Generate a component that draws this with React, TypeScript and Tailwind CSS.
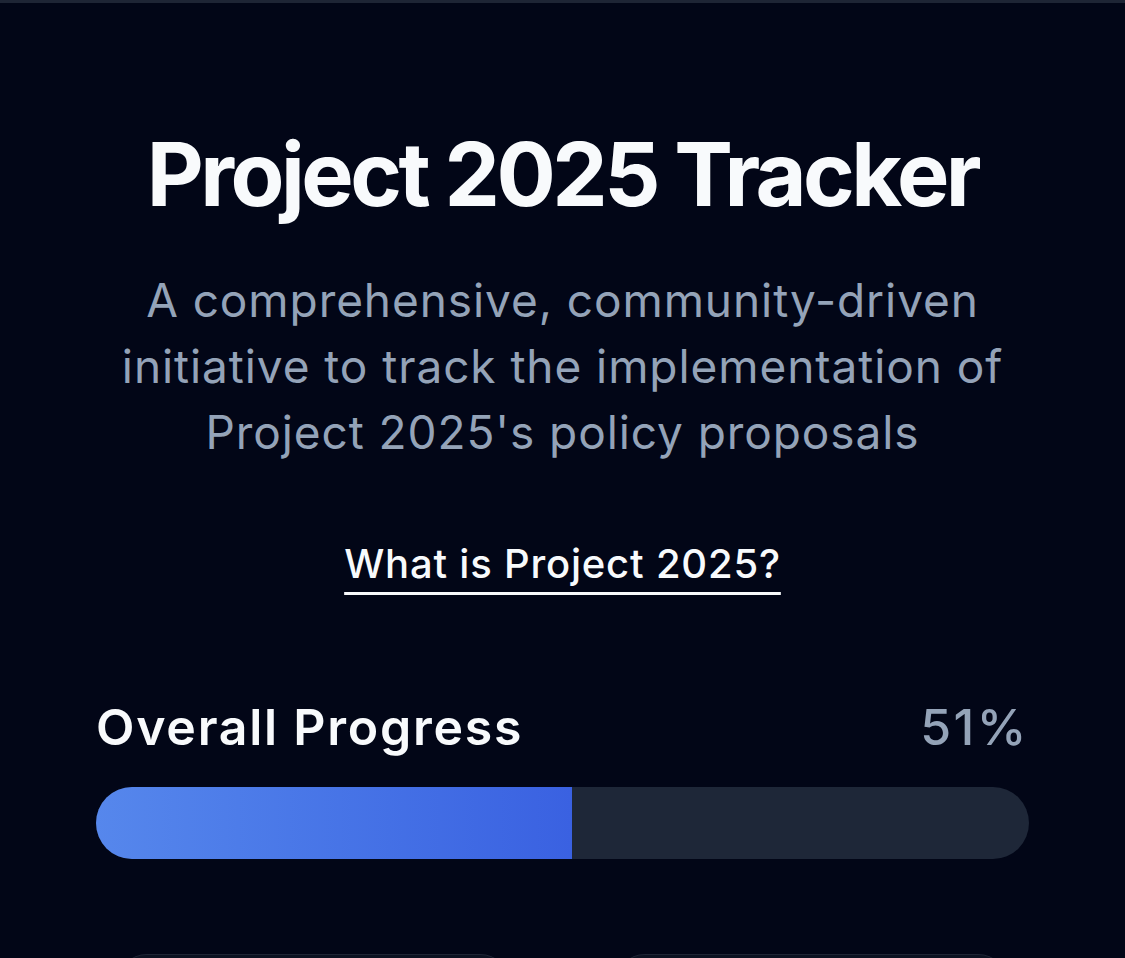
import React from 'react';

const App = () => {
  const progress = 51;

  return (
    <div className="min-h-screen bg-[#020617] border-t-[3px] border-[#1e2535] font-['Inter','Noto_Sans',sans-serif]">
      <main className="px-[96px] pt-[126px]">
        {/* Hero */}
        <section className="flex flex-col items-center text-center">
          <h1 className="text-[88px] leading-[90px] font-bold tracking-[-0.04em] text-[#f8fafc]">
            Project 2025 Tracker
          </h1>
          <p className="mt-[48px] max-w-[920px] text-[46px] leading-[66px] tracking-[0.02em] text-[#94a3b8]">
            A comprehensive, community-driven initiative to track the implementation of Project 2025's policy proposals
          </p>
          <a
            href="#"
            className="mt-[69px] text-[40px] leading-[60px] font-medium tracking-[0.02em] text-[#f8fafc] underline decoration-[3px] underline-offset-[14px]"
          >
            What is Project 2025?
          </a>
        </section>

        {/* Progress */}
        <section className="mt-[98px]">
          <div className="flex items-center justify-between">
            <h2 className="text-[50px] leading-[70px] font-semibold tracking-[0.035em] text-[#f8fafc]">Overall Progress</h2>
            <span className="text-[50px] leading-[70px] font-medium tracking-[0.05em] text-[#94a3b8]">{progress}%</span>
          </div>
          <div className="mt-[25px] h-[72px] w-full rounded-full bg-[#1e2738] overflow-hidden">
            <div
              className="h-full bg-gradient-to-r from-[#5687ec] to-[#3a61e1]"
              style={{ width: `${progress}%` }}
            />
          </div>
        </section>

        {/* Cards */}
        <section className="mt-[95px] grid grid-cols-2 gap-[105px] px-[21px]">
          <div className="h-[220px] rounded-[30px] bg-[#0c1222] border-t border-[#1f2535]" />
          <div className="h-[220px] rounded-[30px] bg-[#0c1222] border-t border-[#1f2535]" />
        </section>
      </main>
    </div>
  );
};

export default App;
